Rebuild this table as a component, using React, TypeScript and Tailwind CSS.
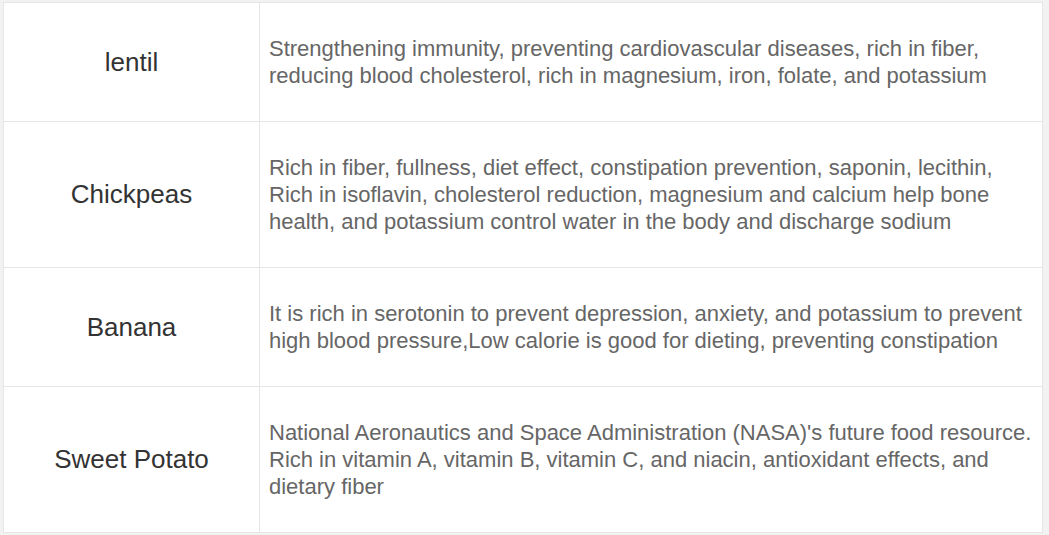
import React from 'react';

const rows = [
  {
    name: 'lentil',
    desc: 'Strengthening immunity, preventing cardiovascular diseases, rich in fiber, reducing blood cholesterol, rich in magnesium, iron, folate, and potassium',
  },
  {
    name: 'Chickpeas',
    desc: 'Rich in fiber, fullness, diet effect, constipation prevention, saponin, lecithin, Rich in isoflavin, cholesterol reduction, magnesium and calcium help bone health, and potassium control water in the body and discharge sodium',
  },
  {
    name: 'Banana',
    desc: 'It is rich in serotonin to prevent depression, anxiety, and potassium to prevent high blood pressure,Low calorie is good for dieting, preventing constipation',
  },
  {
    name: 'Sweet Potato',
    desc: "National Aeronautics and Space Administration (NASA)'s future food resource. Rich in vitamin A, vitamin B, vitamin C, and niacin, antioxidant effects, and dietary fiber",
  },
];

export default function App() {
  return (
    <div className="w-[1049px] h-[535px] bg-[#f2f2f2] pt-[2px] pl-[3px] font-['Liberation_Sans',Arial,sans-serif]">
      <div className="w-[1040px] bg-white border border-[#e6e6e6]">
        {rows.map((r, i) => (
          <div key={r.name} className={`flex ${i > 0 ? 'border-t border-[#e6e6e6]' : ''}`}>
            <div className="w-[256px] shrink-0 flex items-center justify-center border-r border-[#e6e6e6] text-[26px] text-[#333333]">
              {r.name}
            </div>
            <div className="flex-1 py-[32px] pl-[9px] pr-0 text-[22px] leading-[27px] text-[#666666]">
              {r.desc}
            </div>
          </div>
        ))}
      </div>
    </div>
  );
}
